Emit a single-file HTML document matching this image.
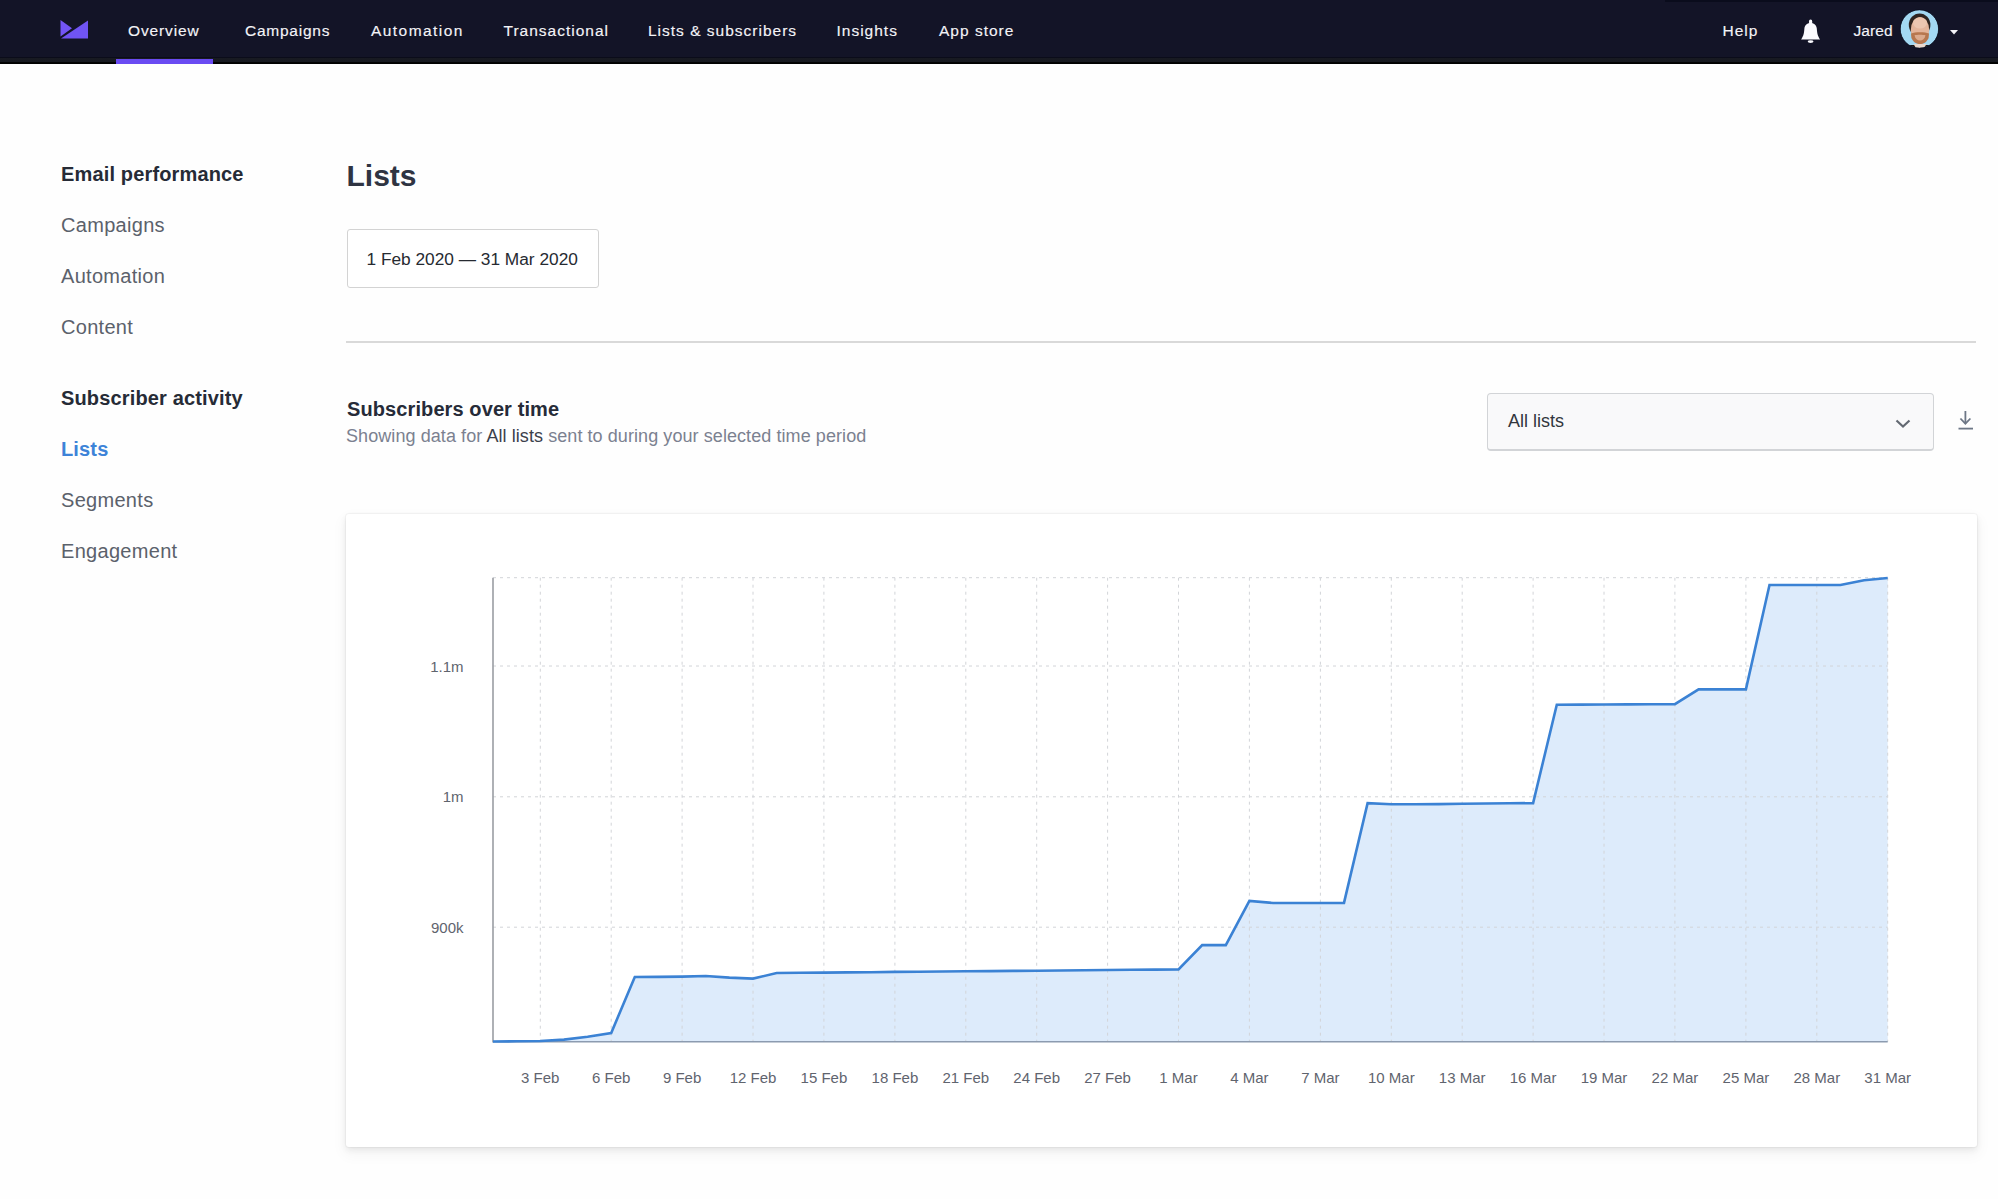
<!DOCTYPE html>
<html>
<head>
<meta charset="utf-8">
<style>
html,body{margin:0;padding:0;}
body{width:1998px;height:1199px;position:relative;overflow:hidden;background:#fefefe;font-family:"Liberation Sans",sans-serif;}
.a{position:absolute;white-space:nowrap;line-height:1;}
.nav{position:absolute;left:0;top:0;width:1998px;height:64px;background:#131427;}
.navb{position:absolute;left:0;top:57px;width:1998px;height:7px;background:linear-gradient(#0b0c1a 0,#0b0c1a 1px,#181a22 1px,#171920 4.5px,#121418 5px,#030304 5.5px,#000 7px);}
.navt{position:absolute;left:1665px;top:0;width:333px;height:1.5px;background:#0a0c1c;}
.ni{position:absolute;top:22.8px;font-size:15.5px;line-height:1;letter-spacing:1px;color:#f3f3f7;white-space:nowrap;-webkit-text-stroke:0.15px #f3f3f7;}
.uline{position:absolute;left:116px;top:59px;width:97px;height:5px;background:#6a4bf2;}
.side{font-size:20px;color:#5b616b;left:61px;letter-spacing:0.3px;}
.sideh{font-size:20px;font-weight:bold;color:#262b36;left:61px;letter-spacing:0.15px;}
.card{position:absolute;left:346px;top:514px;width:1631px;height:633px;background:#fff;border-radius:3px;box-shadow:0 0 1px 1px rgba(0,0,0,0.04),0 3px 6px rgba(0,0,0,0.07),0 6px 14px 3px rgba(0,0,0,0.035);}
.chart{position:absolute;left:0;top:0;}
.ax{font-family:"Liberation Sans",sans-serif;font-size:15px;fill:#5f646e;}
</style>
</head>
<body>
<div class="nav"></div>
<div class="navb"></div>
<div class="navt"></div>
<div class="uline"></div>
<!-- logo -->
<svg class="a" style="left:0;top:0" width="100" height="64" viewBox="0 0 100 64">
  <polygon points="60.5,20 72,28.3 60.5,36.5" fill="#7355f5"/>
  <polygon points="61,38.6 88,20.6 88,38.6" fill="#7054f4"/>
</svg>
<div class="ni" style="left:128px;letter-spacing:0.86px">Overview</div>
<div class="ni" style="left:245px;letter-spacing:0.75px">Campaigns</div>
<div class="ni" style="left:371px;letter-spacing:1.44px">Automation</div>
<div class="ni" style="left:503.5px">Transactional</div>
<div class="ni" style="left:648px">Lists &amp; subscribers</div>
<div class="ni" style="left:836.5px">Insights</div>
<div class="ni" style="left:939px">App store</div>
<div class="ni" style="left:1722.5px">Help</div>
<!-- bell -->
<svg class="a" style="left:1795px;top:14px" width="35" height="34" viewBox="0 0 35 34">
  <ellipse cx="15.6" cy="8" rx="1.7" ry="2.4" fill="#fbfbff"/>
  <path d="M15.6,9 C19.6,9 21.5,11.6 21.8,14.6 C22.2,19.5 22.6,21.8 25.1,25.6 L6.1,25.6 C8.6,21.8 9,19.5 9.4,14.6 C9.7,11.6 11.6,9 15.6,9 Z" fill="#fbfbff"/>
  <ellipse cx="15.6" cy="27.6" rx="2.9" ry="1.3" fill="#fbfbff"/>
</svg>
<div class="ni" style="left:1853.5px;letter-spacing:0.1px">Jared</div>
<!-- avatar -->
<svg class="a" style="left:1899px;top:9px" width="42" height="42" viewBox="0 0 42 42">
  <defs><clipPath id="cc"><circle cx="20.4" cy="20" r="19"/></clipPath></defs>
  <g clip-path="url(#cc)">
    <rect x="0" y="0" width="42" height="42" fill="#a3d8f2"/>
    <ellipse cx="20.6" cy="16" rx="10.8" ry="11.5" fill="#2e2420"/>
    <ellipse cx="21" cy="21" rx="9.2" ry="13" fill="#e4b59b"/>
    <ellipse cx="21" cy="14" rx="7" ry="5.5" fill="#ecc6b0"/>
    <path d="M12,24.5 C16,22.8 26,22.8 30,24.5 L29.6,29 C27.5,33.5 24.5,35 21,35 C17.5,35 14.5,33.5 12.4,29 Z" fill="#b7774f"/>
    <path d="M15.5,26.3 C18,25.6 24,25.6 26.5,26.3 C25.7,30 23.6,31.6 21,31.6 C18.4,31.6 16.3,30 15.5,26.3 Z" fill="#dcab8e"/>
    <path d="M9,36 L33,36 L34,42 L8,42 Z" fill="#1a1515"/>
    <path d="M14.5,35 L27.5,35 L24.5,40 L17.5,40 Z" fill="#e9d9cf"/>
  </g>
  <circle cx="20.4" cy="20" r="19.2" fill="none" stroke="#0a0e1e" stroke-width="0.8"/>
</svg>
<svg class="a" style="left:1948px;top:27px" width="12" height="10" viewBox="0 0 12 10">
  <polygon points="2,3 10,3 6,7.5" fill="#f3f3f7"/>
</svg>

<!-- sidebar -->
<div class="a sideh" style="top:164.4px">Email performance</div>
<div class="a side" style="top:215.4px">Campaigns</div>
<div class="a side" style="top:266.4px">Automation</div>
<div class="a side" style="top:317.4px">Content</div>
<div class="a sideh" style="top:388.4px">Subscriber activity</div>
<div class="a sideh" style="top:439.4px;color:#3d83d8">Lists</div>
<div class="a side" style="top:490.4px">Segments</div>
<div class="a side" style="top:541.4px">Engagement</div>

<!-- main -->
<div class="a" style="left:346.5px;top:161.3px;font-size:30px;font-weight:bold;color:#2f3442">Lists</div>
<div class="a" style="left:347px;top:229px;width:250px;height:57px;border:1.5px solid #d3d3d3;border-radius:3px;background:#fff"></div>
<div class="a" style="left:366.5px;top:251px;font-size:17.3px;color:#262a31">1 Feb 2020 — 31 Mar 2020</div>
<div class="a" style="left:346px;top:341px;width:1630px;height:1.5px;background:#d9d9d9"></div>

<div class="a" style="left:347px;top:398.8px;font-size:20px;font-weight:bold;color:#262b38;letter-spacing:0.1px">Subscribers over time</div>
<div class="a" style="left:346px;top:427.3px;font-size:18px;color:#7b8190;letter-spacing:0.075px">Showing data for <span style="color:#3b404b">All lists</span> sent to during your selected time period</div>

<div class="a" style="left:1487px;top:392.5px;width:445px;height:55.5px;border:1.5px solid #d2d4d7;border-bottom-width:2.5px;border-radius:4px;background:#f9f9fa"></div>
<div class="a" style="left:1508px;top:412.3px;font-size:18px;color:#31363d">All lists</div>
<svg class="a" style="left:1890px;top:412px" width="26" height="22" viewBox="0 0 26 22">
  <polyline points="6.5,8.5 13,14.5 19.5,8.5" fill="none" stroke="#636972" stroke-width="2.2"/>
</svg>
<svg class="a" style="left:1952px;top:405px" width="28" height="30" viewBox="0 0 28 30">
  <line x1="13.4" y1="6" x2="13.4" y2="18.5" stroke="#6d7786" stroke-width="1.8"/>
  <polyline points="8.4,13.5 13.4,18.7 18.4,13.5" fill="none" stroke="#6d7786" stroke-width="1.8"/>
  <line x1="6.5" y1="23.6" x2="21" y2="23.6" stroke="#6d7786" stroke-width="1.8"/>
</svg>

<div class="card"></div>
<svg class="chart" width="1998" height="1199" viewBox="0 0 1998 1199">
<path d="M493.0,1041.5 L516.6,1041.3 L540.3,1041.0 L563.9,1039.6 L587.6,1036.8 L611.2,1033.0 L634.8,977.0 L658.5,976.9 L682.1,976.6 L705.8,976.0 L729.4,977.6 L753.0,978.6 L776.7,973.0 L800.3,972.8 L823.9,972.6 L847.6,972.4 L871.2,972.2 L894.9,971.9 L918.5,971.7 L942.1,971.5 L965.8,971.3 L989.4,971.1 L1013.1,970.9 L1036.7,970.7 L1060.3,970.5 L1084.0,970.2 L1107.6,970.0 L1131.3,969.8 L1154.9,969.6 L1178.5,969.4 L1202.2,945.1 L1225.8,945.1 L1249.4,900.9 L1273.1,903.0 L1296.7,903.0 L1320.4,903.0 L1344.0,902.9 L1367.6,803.2 L1391.3,804.3 L1414.9,804.3 L1438.6,804.1 L1462.2,803.8 L1485.8,803.5 L1509.5,803.3 L1533.1,803.1 L1556.8,704.7 L1580.4,704.6 L1604.0,704.5 L1627.7,704.4 L1651.3,704.3 L1674.9,704.1 L1698.6,689.4 L1722.2,689.4 L1745.9,689.4 L1769.5,585.0 L1793.1,585.0 L1816.8,585.0 L1840.4,585.0 L1864.1,580.2 L1887.7,578.0 L1887.7,1041.7 L493.0,1041.7 Z" fill="#ddebfb"/>
<line x1="493.0" y1="577.7" x2="1887.7" y2="577.7" stroke="#d2d4d8" stroke-width="1" stroke-dasharray="3 4"/>
<line x1="493.0" y1="666.0" x2="1887.7" y2="666.0" stroke="#d2d4d8" stroke-width="1" stroke-dasharray="3 4"/>
<line x1="493.0" y1="796.8" x2="1887.7" y2="796.8" stroke="#d2d4d8" stroke-width="1" stroke-dasharray="3 4"/>
<line x1="493.0" y1="927.2" x2="1887.7" y2="927.2" stroke="#d2d4d8" stroke-width="1" stroke-dasharray="3 4"/>
<line x1="540.3" y1="577.7" x2="540.3" y2="1041.7" stroke="#d2d4d8" stroke-width="1" stroke-dasharray="3 4"/>
<line x1="611.2" y1="577.7" x2="611.2" y2="1041.7" stroke="#d2d4d8" stroke-width="1" stroke-dasharray="3 4"/>
<line x1="682.1" y1="577.7" x2="682.1" y2="1041.7" stroke="#d2d4d8" stroke-width="1" stroke-dasharray="3 4"/>
<line x1="753.0" y1="577.7" x2="753.0" y2="1041.7" stroke="#d2d4d8" stroke-width="1" stroke-dasharray="3 4"/>
<line x1="823.9" y1="577.7" x2="823.9" y2="1041.7" stroke="#d2d4d8" stroke-width="1" stroke-dasharray="3 4"/>
<line x1="894.9" y1="577.7" x2="894.9" y2="1041.7" stroke="#d2d4d8" stroke-width="1" stroke-dasharray="3 4"/>
<line x1="965.8" y1="577.7" x2="965.8" y2="1041.7" stroke="#d2d4d8" stroke-width="1" stroke-dasharray="3 4"/>
<line x1="1036.7" y1="577.7" x2="1036.7" y2="1041.7" stroke="#d2d4d8" stroke-width="1" stroke-dasharray="3 4"/>
<line x1="1107.6" y1="577.7" x2="1107.6" y2="1041.7" stroke="#d2d4d8" stroke-width="1" stroke-dasharray="3 4"/>
<line x1="1178.5" y1="577.7" x2="1178.5" y2="1041.7" stroke="#d2d4d8" stroke-width="1" stroke-dasharray="3 4"/>
<line x1="1249.4" y1="577.7" x2="1249.4" y2="1041.7" stroke="#d2d4d8" stroke-width="1" stroke-dasharray="3 4"/>
<line x1="1320.4" y1="577.7" x2="1320.4" y2="1041.7" stroke="#d2d4d8" stroke-width="1" stroke-dasharray="3 4"/>
<line x1="1391.3" y1="577.7" x2="1391.3" y2="1041.7" stroke="#d2d4d8" stroke-width="1" stroke-dasharray="3 4"/>
<line x1="1462.2" y1="577.7" x2="1462.2" y2="1041.7" stroke="#d2d4d8" stroke-width="1" stroke-dasharray="3 4"/>
<line x1="1533.1" y1="577.7" x2="1533.1" y2="1041.7" stroke="#d2d4d8" stroke-width="1" stroke-dasharray="3 4"/>
<line x1="1604.0" y1="577.7" x2="1604.0" y2="1041.7" stroke="#d2d4d8" stroke-width="1" stroke-dasharray="3 4"/>
<line x1="1674.9" y1="577.7" x2="1674.9" y2="1041.7" stroke="#d2d4d8" stroke-width="1" stroke-dasharray="3 4"/>
<line x1="1745.9" y1="577.7" x2="1745.9" y2="1041.7" stroke="#d2d4d8" stroke-width="1" stroke-dasharray="3 4"/>
<line x1="1816.8" y1="577.7" x2="1816.8" y2="1041.7" stroke="#d2d4d8" stroke-width="1" stroke-dasharray="3 4"/>
<line x1="1887.7" y1="577.7" x2="1887.7" y2="1041.7" stroke="#d2d4d8" stroke-width="1" stroke-dasharray="3 4"/>
<line x1="493.0" y1="577.7" x2="493.0" y2="1042.4" stroke="#9a9da3" stroke-width="1.6"/>
<line x1="493.0" y1="1041.7" x2="1887.7" y2="1041.7" stroke="#8c9bb0" stroke-width="1.6"/>
<path d="M493.0,1041.5 L516.6,1041.3 L540.3,1041.0 L563.9,1039.6 L587.6,1036.8 L611.2,1033.0 L634.8,977.0 L658.5,976.9 L682.1,976.6 L705.8,976.0 L729.4,977.6 L753.0,978.6 L776.7,973.0 L800.3,972.8 L823.9,972.6 L847.6,972.4 L871.2,972.2 L894.9,971.9 L918.5,971.7 L942.1,971.5 L965.8,971.3 L989.4,971.1 L1013.1,970.9 L1036.7,970.7 L1060.3,970.5 L1084.0,970.2 L1107.6,970.0 L1131.3,969.8 L1154.9,969.6 L1178.5,969.4 L1202.2,945.1 L1225.8,945.1 L1249.4,900.9 L1273.1,903.0 L1296.7,903.0 L1320.4,903.0 L1344.0,902.9 L1367.6,803.2 L1391.3,804.3 L1414.9,804.3 L1438.6,804.1 L1462.2,803.8 L1485.8,803.5 L1509.5,803.3 L1533.1,803.1 L1556.8,704.7 L1580.4,704.6 L1604.0,704.5 L1627.7,704.4 L1651.3,704.3 L1674.9,704.1 L1698.6,689.4 L1722.2,689.4 L1745.9,689.4 L1769.5,585.0 L1793.1,585.0 L1816.8,585.0 L1840.4,585.0 L1864.1,580.2 L1887.7,578.0" fill="none" stroke="#3b82d4" stroke-width="2.6" stroke-linejoin="miter" stroke-linecap="butt"/>
<text x="463.5" y="671.6" text-anchor="end" class="ax">1.1m</text>
<text x="463.5" y="802.4" text-anchor="end" class="ax">1m</text>
<text x="463.5" y="932.8" text-anchor="end" class="ax">900k</text>
<text x="540.3" y="1083" text-anchor="middle" class="ax">3 Feb</text>
<text x="611.2" y="1083" text-anchor="middle" class="ax">6 Feb</text>
<text x="682.1" y="1083" text-anchor="middle" class="ax">9 Feb</text>
<text x="753.0" y="1083" text-anchor="middle" class="ax">12 Feb</text>
<text x="823.9" y="1083" text-anchor="middle" class="ax">15 Feb</text>
<text x="894.9" y="1083" text-anchor="middle" class="ax">18 Feb</text>
<text x="965.8" y="1083" text-anchor="middle" class="ax">21 Feb</text>
<text x="1036.7" y="1083" text-anchor="middle" class="ax">24 Feb</text>
<text x="1107.6" y="1083" text-anchor="middle" class="ax">27 Feb</text>
<text x="1178.5" y="1083" text-anchor="middle" class="ax">1 Mar</text>
<text x="1249.4" y="1083" text-anchor="middle" class="ax">4 Mar</text>
<text x="1320.4" y="1083" text-anchor="middle" class="ax">7 Mar</text>
<text x="1391.3" y="1083" text-anchor="middle" class="ax">10 Mar</text>
<text x="1462.2" y="1083" text-anchor="middle" class="ax">13 Mar</text>
<text x="1533.1" y="1083" text-anchor="middle" class="ax">16 Mar</text>
<text x="1604.0" y="1083" text-anchor="middle" class="ax">19 Mar</text>
<text x="1674.9" y="1083" text-anchor="middle" class="ax">22 Mar</text>
<text x="1745.9" y="1083" text-anchor="middle" class="ax">25 Mar</text>
<text x="1816.8" y="1083" text-anchor="middle" class="ax">28 Mar</text>
<text x="1887.7" y="1083" text-anchor="middle" class="ax">31 Mar</text>
</svg>
</body>
</html>
